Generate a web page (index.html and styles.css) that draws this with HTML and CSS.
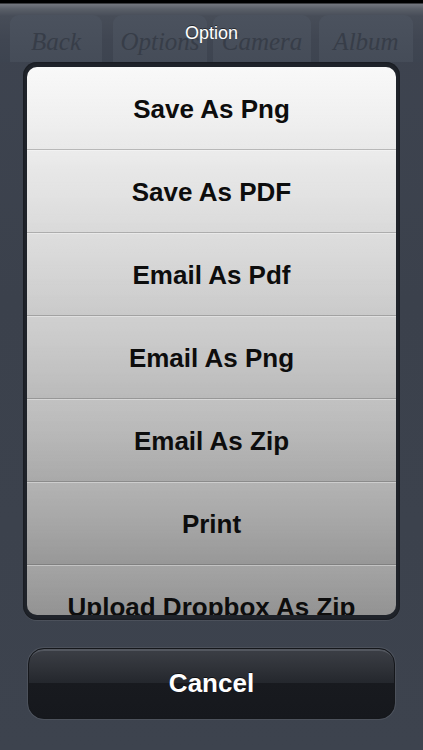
FILE: index.html
```html
<!DOCTYPE html>
<html>
<head>
<meta charset="utf-8">
<link rel="stylesheet" href="styles.css">
</head>
<body>
<div class="screen">
  <div class="header">
    <div class="ghost-bar">
      <div class="ghost b1">Back</div>
      <div class="ghost b2">Options</div>
      <div class="ghost b3">Camera</div>
      <div class="ghost b4">Album</div>
    </div>
    <div class="title">Option</div>
  </div>
  <div class="sheet">
    <div class="list">
      <div class="row">Save As Png</div>
      <div class="row">Save As PDF</div>
      <div class="row">Email As Pdf</div>
      <div class="row">Email As Png</div>
      <div class="row">Email As Zip</div>
      <div class="row">Print</div>
      <div class="row">Upload Dropbox As Zip</div>
    </div>
  </div>
  <div class="cancel-wrap">
    <div class="cancel"><span class="cancel-label">Cancel</span></div>
  </div>
</div>
</body>
</html>
```
FILE: styles.css
```css
* { box-sizing: border-box; }
html, body { margin: 0; padding: 0; }
body {
  width: 423px;
  height: 750px;
  overflow: hidden;
  background: #3c424d;
  font-family: "Liberation Sans", Arial, sans-serif;
}
.screen {
  width: 423px;
  height: 750px;
  display: flex;
  flex-direction: column;
  background: linear-gradient(#3e4450, #3b414c 40%, #3d434e);
}
.header {
  position: relative;
  height: 62px;
  overflow: hidden;
  background: linear-gradient(#000 0, #000 3px, #74777f 4px, #5a5f68 9px, #474d58 16px, #404652 40px, #3d4450 62px);
}
.ghost-bar {
  display: flex;
  padding: 15px 0 0 10px;
}
.ghost {
  height: 56px;
  border-radius: 9px;
  background: linear-gradient(#4b525e, #444b57);
  color: #373d48;
  font-family: "Liberation Serif", "Times New Roman", serif;
  font-style: italic;
  font-size: 25px;
  display: flex;
  align-items: center;
  justify-content: center;
  padding-bottom: 2px;
}
.b1 { width: 92px; }
.b2 { width: 94px; margin-left: 11px; }
.b3 { width: 98px; margin-left: 6px; }
.b4 { width: 94px; margin-left: 8px; }
.title {
  position: absolute;
  left: 0;
  right: 0;
  top: 22px;
  text-align: center;
  color: #fff;
  font-size: 18px;
  line-height: 22px;
  text-shadow: 0 -1px 0 rgba(0,0,0,0.5);
}
.sheet {
  margin: 0 23px;
  height: 558px;
  padding: 5px 4px 5px 4px;
  border-radius: 14px;
  background: #1f232a;
  box-shadow: 0 1px 0 rgba(255,255,255,0.08), inset 0 0 2px rgba(0,0,0,0.6);
}
.list {
  height: 548px;
  border-radius: 10px;
  overflow: hidden;
  background: linear-gradient(#f8f8f8 0, #e2e2e2 120px, #c4c4c4 280px, #a8a8a8 420px, #8d8d8d 548px);
}
.row {
  height: 83px;
  display: flex;
  align-items: center;
  justify-content: center;
  font-weight: bold;
  font-size: 26px;
  color: #0d0d0d;
  border-bottom: 1px solid rgba(0,0,0,0.22);
  box-shadow: inset 0 1px 0 rgba(255,255,255,0.35);
  background: linear-gradient(rgba(255,255,255,0.12), rgba(255,255,255,0));
  padding-top: 2px;
  white-space: nowrap;
}
.row:first-child { box-shadow: none; }
.cancel-wrap {
  padding: 28px 28px 0 28px;
}
.cancel {
  height: 71px;
  border-radius: 16px;
  border: 1px solid #15171b;
  box-shadow: 0 0 0 1px rgba(255,255,255,0.08), inset 0 4px 0 -2px #53575f;
  background: linear-gradient(#3c3f46 0, #2e3137 30%, #24272d 49%, #181a1f 50%, #16181d 100%);
  display: flex;
  align-items: center;
  justify-content: center;
}
.cancel-label {
  color: #fff;
  font-weight: bold;
  font-size: 26px;
  text-shadow: 0 -1px 0 rgba(0,0,0,0.6);
}
```
